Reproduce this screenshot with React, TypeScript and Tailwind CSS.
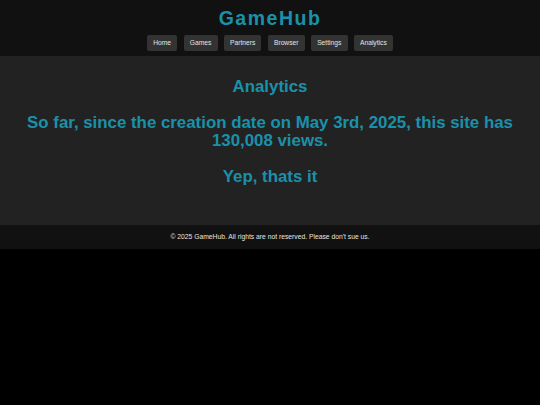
import React from "react";

const links = ["Home", "Games", "Partners", "Browser", "Settings", "Analytics"];

export default function App() {
  return (
    <div
      className="min-h-[405px] bg-black"
      style={{ fontFamily: '"Liberation Sans", Arial, sans-serif' }}
    >
      <header className="flex h-[56px] flex-col items-center bg-[#111111] pt-[7px]">
        <h1 className="text-[19.5px] font-bold leading-[22.4px] tracking-[1.5px] text-[#1a91aa]">
          GameHub
        </h1>
        <nav className="mt-[6px] flex gap-[6.3px]">
          {links.map((l) => (
            <a
              key={l}
              className="flex h-[15.3px] items-center rounded-[2px] bg-[#333333] px-[6.2px] text-[6.7px] leading-none text-[#e4e4e4]"
            >
              {l}
            </a>
          ))}
        </nav>
      </header>
      <main className="flex h-[169px] flex-col items-center bg-[#222222] pt-[21.5px] text-center text-[16.85px] font-bold leading-[18.5px] text-[#1a91aa]">
        <h2>Analytics</h2>
        <p className="mt-[17.5px]">
          So far, since the creation date on May 3rd, 2025, this site has
          <br />
          130,008 views.
        </p>
        <p className="mt-[17.1px]">Yep, thats it</p>
      </main>
      <footer className="flex h-[24px] items-center justify-center bg-[#111111] text-[6.75px] text-[#e4e4e4]">
        © 2025 GameHub. All rights are not reserved. Please don't sue us.
      </footer>
    </div>
  );
}
